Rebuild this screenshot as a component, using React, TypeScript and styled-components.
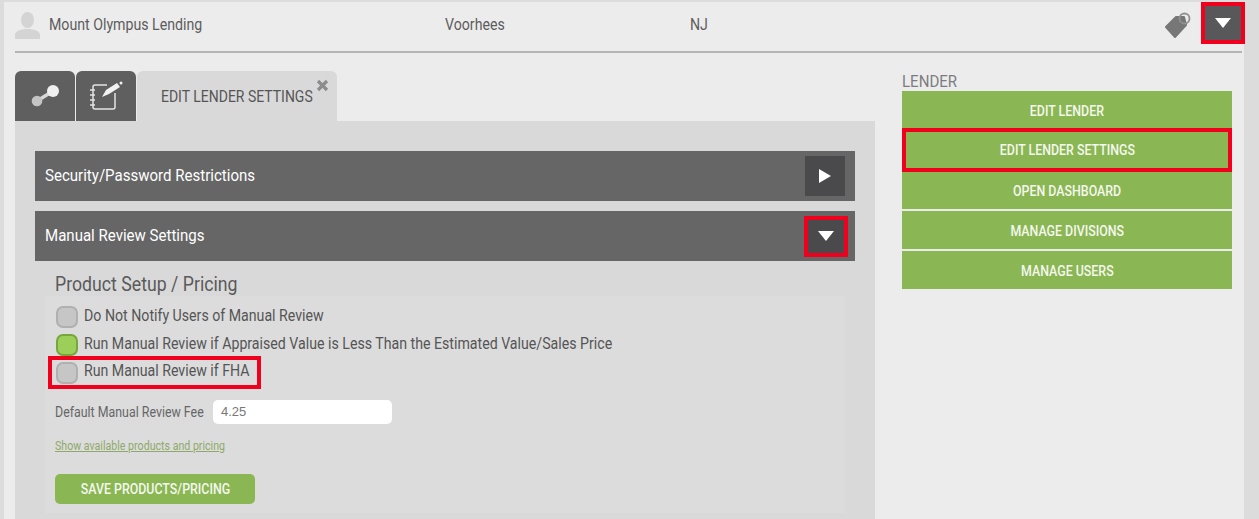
import React from 'react';
import styled, { createGlobalStyle } from 'styled-components';

const GlobalStyle = createGlobalStyle`
  html, body { margin: 0; padding: 0; background: #dcdcdc; height: 100%; overflow: hidden; }
  body { font-family: Roboto, "Liberation Sans", sans-serif; color: #555; }
  * { box-sizing: border-box; }
`;

// the original uses a condensed face, Roboto squeezed sideways is the closest we have
const Narrow = styled.span<{ $center?: boolean }>`
  display: inline-block;
  white-space: nowrap;
  transform: scaleX(0.885);
  transform-origin: ${({ $center }) => ($center ? 'center' : 'left')} center;
`;

const Page = styled.div`
  width: 1240px;
  height: 517px;
  margin: 2px 0 0 4px;
  background: #ececec;
`;

const LenderRow = styled.div`
  display: flex;
  align-items: center;
  height: 51px;
  margin: 0 2px 0 11px;
  border-bottom: 2px solid #b5b5b5;
`;

const UserIcon = styled.svg`
  width: 25px;
  height: 28px;
  margin-right: 9px;
  margin-top: -2px;
  fill: #d4d4d4;
`;

const Cell = styled.div<{ $width: number }>`
  width: ${({ $width }) => $width}px;
  font-size: 16px;
  color: #5c5c5c;
  margin-top: -5px;
`;

const RowEnd = styled.div`
  margin-left: auto;
  display: flex;
  align-items: center;
  gap: 13px;
  margin-right: 1px;
  margin-top: -7px;
`;

const TagIcon = styled.svg`
  width: 28px;
  height: 28px;
  margin-top: 4px;
`;

const ToggleButton = styled.button<{ $w: number; $h: number; $tone: string; $marked?: boolean }>`
  width: ${({ $w }) => $w}px;
  height: ${({ $h }) => $h}px;
  padding: 0;
  border: 0;
  background: ${({ $tone }) => $tone};
  display: flex;
  align-items: center;
  justify-content: center;
  flex: none;
  box-shadow: ${({ $marked }) => ($marked ? '0 0 0 4px #f0001c' : 'none')};
`;

const Arrow = styled.span<{ $dir: 'down' | 'right' }>`
  width: 0;
  height: 0;
  ${({ $dir }) =>
    $dir === 'down'
      ? 'border-left: 8px solid transparent; border-right: 8px solid transparent; border-top: 10px solid #fff;'
      : 'border-top: 7px solid transparent; border-bottom: 7px solid transparent; border-left: 12px solid #fff;'}
`;

const Columns = styled.div`
  display: flex;
  margin-left: 11px;
`;

const MainColumn = styled.div`
  width: 860px;
  padding-top: 18px;
`;

const Tabs = styled.div`
  display: flex;
  gap: 1px;
  height: 50px;
`;

const IconTab = styled.div`
  width: 60px;
  height: 50px;
  background: #5f5f5f;
  border-radius: 6px 6px 0 0;
  display: flex;
  align-items: center;
  justify-content: center;
`;

const ActiveTab = styled.div`
  position: relative;
  width: 200px;
  height: 50px;
  background: #d9d9d9;
  border-radius: 6px 6px 0 0;
  padding: 16px 0 0 24px;
  font-size: 15.8px;
  color: #555;
`;

const CloseMark = styled.svg`
  position: absolute;
  top: 8px;
  right: 8px;
  width: 13px;
  height: 13px;
`;

const Panel = styled.div`
  background: #d9d9d9;
  height: 398px;
  padding: 30px 20px 0;
`;

const AccordionHead = styled.div`
  height: 50px;
  background: #666;
  color: #fff;
  display: flex;
  align-items: center;
  justify-content: space-between;
  padding: 0 10px;
  font-size: 17px;
  margin-bottom: 10px;
`;

const HeadTitle = styled(Narrow)`
  margin-top: -2px;
`;

const HeadEnd = styled.div`
  margin-right: 1px;
`;

const AccordionBody = styled.div`
  padding: 1px 10px 0;
`;

const SectionTitle = styled.div`
  font-size: 20px;
  line-height: 24px;
  color: #5a5a5a;
  padding-left: 10px;
  height: 24px;
`;

const SettingsBox = styled.div`
  background: #dcdcdc;
  height: 217px;
  padding: 7px 10px 0;
`;

const CheckRow = styled.div<{ $marked?: boolean }>`
  display: flex;
  align-items: center;
  gap: 6px;
  font-size: 16px;
  color: #555;
  ${({ $marked }) =>
    $marked
      ? 'width: 205px; height: 25px; margin: 1px 0 0 -3px; padding-left: 4px; outline: 4px solid #f0001c;'
      : 'height: 28px; margin-left: 1px;'}
`;

const CheckText = styled(Narrow)`
  margin-top: -4px;
`;

const CheckBox = styled.span<{ $on?: boolean }>`
  width: 22px;
  height: 22px;
  flex: none;
  border-radius: 7px;
  background: ${({ $on }) => ($on ? '#9ccf5a' : '#c6c6c6')};
  border: 2px solid ${({ $on }) => ($on ? '#76a63c' : '#b0b0b0')};
`;

const FeeRow = styled.div`
  display: flex;
  align-items: center;
  gap: 10px;
  margin-top: 15px;
  font-size: 14px;
  color: #666;
`;

const FeeLabel = styled.div`
  width: 148px;
`;

const FeeInput = styled.div`
  width: 179px;
  height: 24px;
  background: #fff;
  border-radius: 5px;
  font-family: "Liberation Sans", sans-serif;
  font-size: 13px;
  line-height: 24px;
  color: #777;
  padding-left: 8px;
`;

const ProductsLink = styled.a`
  display: block;
  margin-top: 15px;
  height: 14px;
  font-size: 12px;
  line-height: 14px;
  color: #8fa96b;

  & > span {
    text-decoration: underline;
  }
`;

const SaveButton = styled.button`
  display: block;
  margin-top: 21px;
  width: 200px;
  height: 30px;
  padding: 0;
  border: 0;
  border-radius: 5px;
  background: #8bb654;
  color: #f4f8ee;
  font: 500 14px Roboto, sans-serif;
`;

const Side = styled.div`
  width: 330px;
  margin-left: 27px;
  padding-top: 19px;
`;

const SideTitle = styled.div`
  font-size: 17px;
  line-height: 19px;
  color: #7c7c80;
`;

const SideButtons = styled.div`
  display: flex;
  flex-direction: column;
  gap: 2px;
`;

const SideButton = styled.button<{ $marked?: boolean }>`
  height: 38px;
  padding: 2px 0 0;
  border: 0;
  background: #8bb654;
  color: #f4f8ee;
  font: 500 14px Roboto, sans-serif;
  ${({ $marked }) => $marked && 'height: 44px; margin: -3px 0; padding: 0; position: relative; box-shadow: inset 0 0 0 4px #f0001c;'}
`;

const App = () => (
  <>
    <GlobalStyle />
    <Page>
      <LenderRow>
        <UserIcon viewBox="0 0 25 28">
          <ellipse cx="12.5" cy="8" rx="6.500" ry="8" />
          <path d="M0 27v-4c0-4 6-6 12.500-6S25 19 25 23v4z" />
        </UserIcon>
        <Cell $width={396}><Narrow>Mount Olympus Lending</Narrow></Cell>
        <Cell $width={245}><Narrow>Voorhees</Narrow></Cell>
        <Cell $width={100}><Narrow>NJ</Narrow></Cell>
        <RowEnd>
          <TagIcon viewBox="0 0 28 28">
            <path d="M2 16 12 6l8 0 2 8-11 12z" fill="#777" stroke="#777" strokeWidth="2" strokeLinejoin="round" />
            <circle cx="20.500" cy="7.500" r="5" fill="none" stroke="#909090" strokeWidth="1.800" />
          </TagIcon>
          <ToggleButton $w={36} $h={34} $tone="#58585a" $marked>
            <Arrow $dir="down" />
          </ToggleButton>
        </RowEnd>
      </LenderRow>
      <Columns>
        <MainColumn>
          <Tabs>
            <IconTab>
              <svg width="30" height="30" viewBox="0 0 30 30">
                <path d="M7 20 23 10" stroke="#d8d8d8" strokeWidth="3.500" />
                <circle cx="7" cy="20" r="5.300" fill="#c4c4c4" />
                <circle cx="23" cy="10" r="6" fill="#f0f0f0" />
              </svg>
            </IconTab>
            <IconTab>
              <svg width="34" height="36" viewBox="0 0 34 36" fill="none" stroke="#e4e4e4" strokeWidth="1.500">
                <path d="M18 7H6c-1 0-2 1-2 2v20c0 1 1 2 2 2h18c1 0 2-1 2-2V15" />
                <path d="M1 12h5M1 17h5M1 22h5M1 27h5" />
                <path d="M13 19 17 12 28 5l3 4-11 7z" fill="#f2f2f2" stroke="none" />
                <circle cx="32" cy="5" r="1.500" fill="#f2f2f2" stroke="none" />
              </svg>
            </IconTab>
            <ActiveTab>
              <Narrow>EDIT LENDER SETTINGS</Narrow>
              <CloseMark viewBox="0 0 13 13">
                <path d="M2 2l9 9M11 2l-9 9" stroke="#8c8c8c" strokeWidth="3.200" />
              </CloseMark>
            </ActiveTab>
          </Tabs>
          <Panel>
            <AccordionHead>
              <HeadTitle>Security/Password Restrictions</HeadTitle>
              <ToggleButton $w={40} $h={40} $tone="#4a4a4c">
                <Arrow $dir="right" />
              </ToggleButton>
            </AccordionHead>
            <AccordionHead>
              <HeadTitle>Manual Review Settings</HeadTitle>
              <HeadEnd>
                <ToggleButton $w={36} $h={33} $tone="#4a4a4c" $marked>
                  <Arrow $dir="down" />
                </ToggleButton>
              </HeadEnd>
            </AccordionHead>
            <AccordionBody>
              <SectionTitle><Narrow>Product Setup / Pricing</Narrow></SectionTitle>
              <SettingsBox>
                <CheckRow>
                  <CheckBox />
                  <CheckText>Do Not Notify Users of Manual Review</CheckText>
                </CheckRow>
                <CheckRow>
                  <CheckBox $on />
                  <CheckText>Run Manual Review if Appraised Value is Less Than the Estimated Value/Sales Price</CheckText>
                </CheckRow>
                <CheckRow $marked>
                  <CheckBox />
                  <CheckText>Run Manual Review if FHA</CheckText>
                </CheckRow>
                <FeeRow>
                  <FeeLabel><Narrow>Default Manual Review Fee</Narrow></FeeLabel>
                  <FeeInput>4.25</FeeInput>
                </FeeRow>
                <ProductsLink><Narrow>Show available products and pricing</Narrow></ProductsLink>
                <SaveButton><Narrow $center>SAVE PRODUCTS/PRICING</Narrow></SaveButton>
              </SettingsBox>
            </AccordionBody>
          </Panel>
        </MainColumn>
        <Side>
          <SideTitle><Narrow>LENDER</Narrow></SideTitle>
          <SideButtons>
            <SideButton><Narrow $center>EDIT LENDER</Narrow></SideButton>
            <SideButton $marked><Narrow $center>EDIT LENDER SETTINGS</Narrow></SideButton>
            <SideButton><Narrow $center>OPEN DASHBOARD</Narrow></SideButton>
            <SideButton><Narrow $center>MANAGE DIVISIONS</Narrow></SideButton>
            <SideButton><Narrow $center>MANAGE USERS</Narrow></SideButton>
          </SideButtons>
        </Side>
      </Columns>
    </Page>
  </>
);

export default App;
